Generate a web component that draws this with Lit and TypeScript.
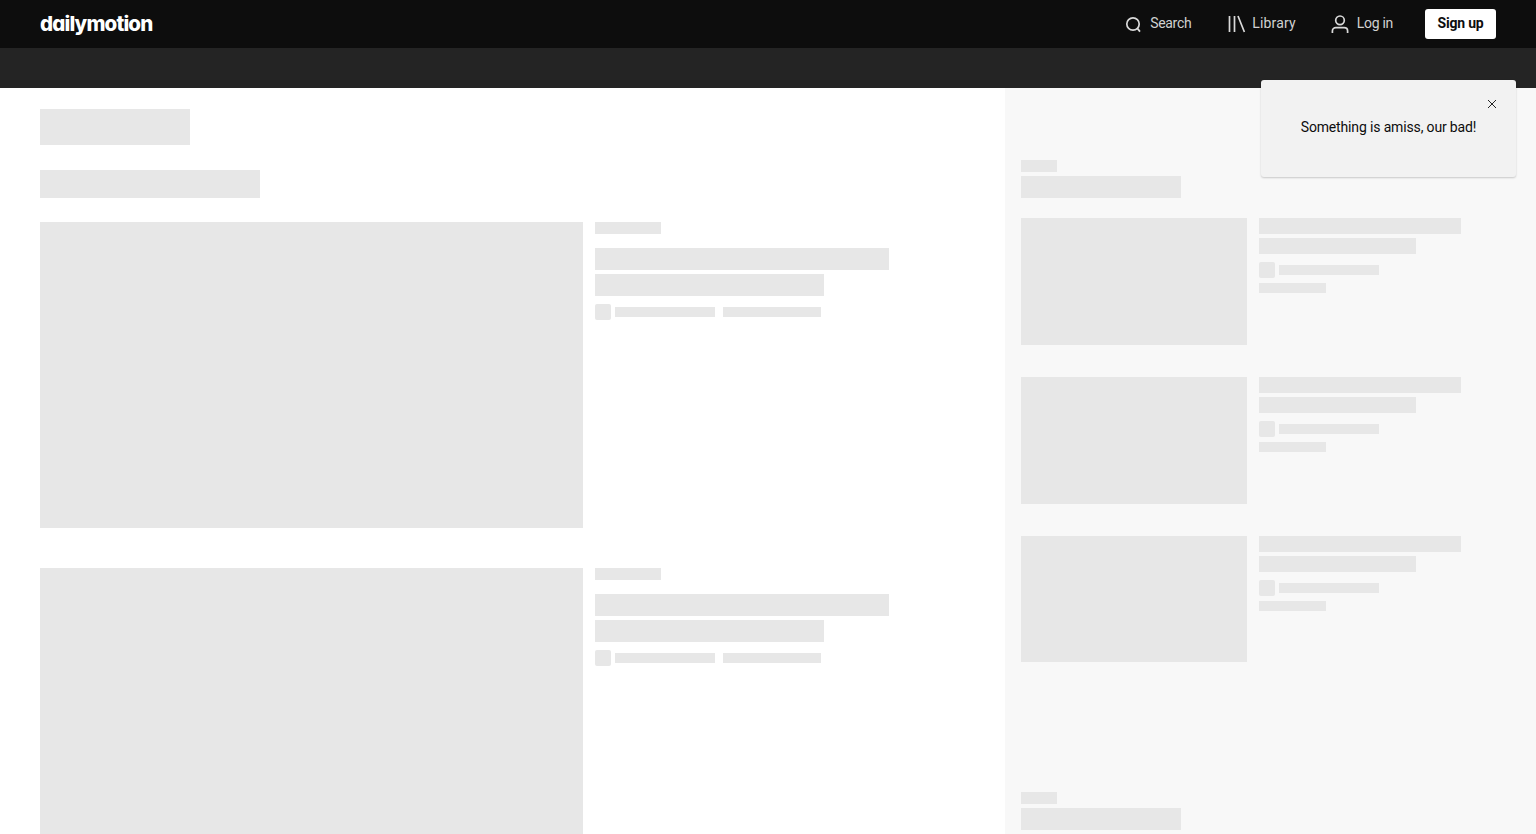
import { LitElement, html, css } from "lit";
import { customElement } from "lit/decorators.js";

const bar = (cls: string) => html`<div class="sk ${cls}"></div>`;

@customElement("app-root")
export class AppRoot extends LitElement {
  static styles = css`
    :host { display: block; height: 834px; overflow: hidden; position: relative; font-family: "Roboto", "Noto Sans", sans-serif; background: #fff; }
    * { box-sizing: border-box; }
    .top { height: 48px; background: #0d0d0d; display: flex; align-items: center; padding: 0 40px; }
    .logo { font-family: "Inter", sans-serif; font-feature-settings: "cv11" 1; font-weight: 800; font-size: 20.5px; color: #fff; letter-spacing: -0.85px; line-height: 48px; }
    .nav { margin-left: auto; display: flex; align-items: center; }
    .item { display: flex; align-items: center; color: #d1d1d1; font-size: 14px; gap: 8px; line-height: 20px; }
    .item span { position: relative; top: -1px; }
    .item svg { display: block; fill: none; stroke: #d9d9d9; stroke-width: 1.7; }
    .search { margin-right: 37px; letter-spacing: -0.3px; }
    .library { margin-right: 35px; letter-spacing: 0.15px; gap: 6px; }
    .login { margin-right: 32px; letter-spacing: -0.3px; gap: 8px; }
    .signup { width: 71px; height: 30px; border-radius: 3px; background: #fff; color: #0d0d0d; font-weight: 700; font-size: 14px; letter-spacing: -0.2px; line-height: 28px; display: flex; align-items: center; justify-content: center; padding-bottom: 2px; }
    .sub { height: 40px; background: #242424; }
    .main { display: flex; height: 746px; overflow: hidden; }
    .left { width: 1005px; padding: 21px 0 0 40px; flex: none; }
    .right { flex: 1; background: #f8f8f8; padding: 72px 0 0 16px; }
    .sk { background: #e7e7e7; }
    .h1 { width: 150px; height: 36px; margin-bottom: 25px; }
    .h2 { width: 220px; height: 28px; margin-bottom: 24px; }
    .card { display: flex; gap: 12px; }
    .card.big { margin-bottom: 40px; }
    .thumb { width: 543px; height: 306px; flex: none; }
    .info { display: flex; flex-direction: column; }
    .kicker { width: 66px; height: 12px; margin-bottom: 14px; }
    .t1 { width: 294px; height: 22px; margin-bottom: 4px; }
    .t2 { width: 229px; height: 22px; margin-bottom: 8px; }
    .meta { display: flex; align-items: center; gap: 4px; }
    .av { width: 16px; height: 16px; border-radius: 2px; }
    .m { width: 100px; height: 10px; }
    .m2 { width: 98px; height: 10px; margin-left: 4px; }
    .eyebrow { width: 36px; height: 12px; margin-bottom: 4px; }
    .stitle { width: 160px; height: 22px; margin-bottom: 20px; }
    .scard { display: flex; gap: 12px; margin-bottom: 32px; }
    .sthumb { width: 226px; height: 127px; flex: none; }
    .scard:last-child .sthumb { height: 126px; }
    .s1 { width: 202px; height: 16px; margin-bottom: 4px; }
    .s2 { width: 157px; height: 16px; margin-bottom: 8px; }
    .s3 { width: 67px; height: 10px; margin-top: 5px; }
    .cards { height: 574px; }
    .toast { position: absolute; left: 1261px; top: 80px; width: 255px; height: 97px; background: #f2f2f2; border-radius: 3px; box-shadow: 0 1px 2px rgba(0,0,0,.2); display: flex; justify-content: center; padding-top: 37px; font-size: 14px; letter-spacing: -0.15px; line-height: 20px; color: #0d0d0d; }
    .close { position: absolute; left: 226px; top: 19px; width: 10px; height: 10px; display: block; stroke: #0d0d0d; stroke-width: 0.9; fill: none; }
  `;

  private big() {
    return html`<div class="card big">
      ${bar("thumb")}
      <div class="info">
        ${bar("kicker")}${bar("t1")}${bar("t2")}
        <div class="meta">${bar("av")}${bar("m")}${bar("m2")}</div>
      </div>
    </div>`;
  }

  private small() {
    return html`<div class="scard">
      ${bar("sthumb")}
      <div class="info">
        ${bar("s1")}${bar("s2")}
        <div class="meta">${bar("av")}${bar("m")}</div>
        ${bar("s3")}
      </div>
    </div>`;
  }

  render() {
    return html`
      <div class="top">
        <div class="logo">dailymotion</div>
        <div class="nav">
          <div class="item search">
            <svg width="17" height="17" viewBox="0 0 17 17"><circle cx="8" cy="8" r="6.2"/><path d="M12.6 12.6l2.4 3"/></svg>
            <span>Search</span>
          </div>
          <div class="item library">
            <svg width="18" height="18" viewBox="0 0 18 18"><path d="M1.5 1v16M6.5 1v16M10 1l6.4 16"/></svg>
            <span>Library</span>
          </div>
          <div class="item login">
            <svg width="18" height="18" viewBox="0 0 18 18"><circle cx="9" cy="5.3" r="4.3"/><path d="M1.4 18v-2c0-2 1.5-3.3 3.5-3.3h8.2c2 0 3.5 1.3 3.5 3.3v2"/></svg>
            <span>Log in</span>
          </div>
          <div class="signup">Sign up</div>
        </div>
      </div>
      <div class="sub"></div>
      <div class="main">
        <div class="left">
          ${bar("h1")}${bar("h2")}
          ${this.big()}${this.big()}
        </div>
        <div class="right">
          ${bar("eyebrow")}${bar("stitle")}
          <div class="cards">${this.small()}${this.small()}${this.small()}</div>
          ${bar("eyebrow")}${bar("stitle")}
        </div>
      </div>
      <div class="toast">
        <span>Something is amiss, our bad!</span>
        <svg class="close" viewBox="0 0 10 10"><path d="M1 1l8 8M9 1l-8 8"/></svg>
      </div>
    `;
  }
}
